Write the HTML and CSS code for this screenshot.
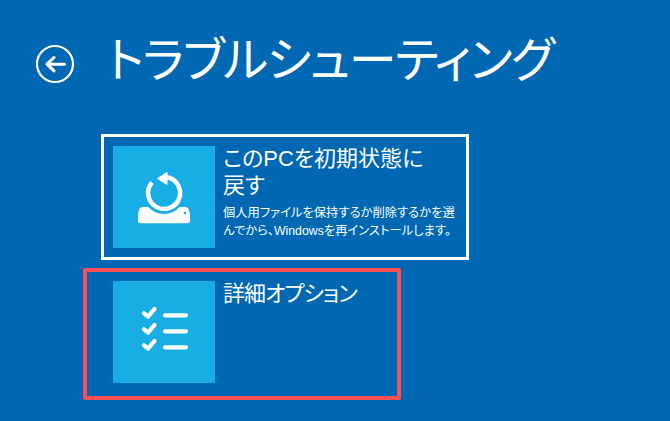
FILE: index.html
```html
<!DOCTYPE html>
<html lang="ja">
<head>
<meta charset="utf-8">
<title>トラブルシューティング</title>
<link rel="stylesheet" href="styles.css">
</head>
<body>
<main class="page">
  <header class="header">
    <svg class="back" viewBox="0 0 40 40" aria-hidden="true">
      <circle cx="20" cy="20" r="18" fill="none" stroke="#fff" stroke-width="2.200"/>
      <path d="M29.500 20.200H13M19 13.500L12 20.200l7 6.700" fill="none" stroke="#fff" stroke-width="3" stroke-linecap="round" stroke-linejoin="round"/>
    </svg>
    <h1 class="title">トラブルシューティング</h1>
  </header>
  <section class="options">
    <div class="card card-focus">
      <div class="tile">
        <svg class="tile-icon" viewBox="0 0 102 102" aria-hidden="true">
          <path d="M53 31.100A16 16 0 1 1 39 36.500" fill="none" stroke="#fff" stroke-width="4.500"/>
          <path d="M44.500 32.500L54 26.500V38.500Z" fill="#fff" stroke="#fff" stroke-width="1" stroke-linejoin="round"/>
          <path fill-rule="evenodd" fill="#fff" d="M35.400 61A21 21 0 0 0 66.600 61H72.500C74 61 75 62 75.500 63L77 67.500V74.500C77 76.300 75.800 77.300 74 77.300H28C26.200 77.300 25 76.300 25 74.500V67.500L26.500 63C27 62 28 61 29.500 61ZM72 65.700A1.300 1.300 0 1 0 72 68.300A1.300 1.300 0 1 0 72 65.700Z"/>
        </svg>
      </div>
      <div class="text">
        <h2 class="card-title">このPCを初期状態に戻す</h2>
        <p class="card-desc">個人用ファイルを保持するか削除するかを選んでから、Windowsを再インストールします。</p>
      </div>
    </div>
    <div class="card card-marked">
      <div class="tile">
        <svg class="tile-icon" viewBox="0 0 102 102" aria-hidden="true">
          <g fill="none" stroke="#fff" stroke-width="4.200" stroke-linecap="round" stroke-linejoin="round">
            <path d="M31 32.300L35 35.700L41.500 28M31 48.300L35 51.700L41.500 44M31 64.300L35 67.700L41.500 60"/>
            <path d="M52 34.300H73M52 50.300H73M52 66.300H73"/>
          </g>
        </svg>
      </div>
      <div class="text">
        <h2 class="card-title">詳細オプション</h2>
      </div>
    </div>
  </section>
</main>
</body>
</html>
```
FILE: styles.css
```css
* { box-sizing: border-box; }
html, body { margin: 0; height: 100%; }
body {
  background: #0068b2;
  color: #fff;
  font-family: "Liberation Sans", "Noto Sans CJK JP", sans-serif;
  font-feature-settings: "palt";
  overflow: hidden;
}
.page { padding: 31px 0 0 0; }
.header {
  display: flex;
  align-items: center;
  height: 60px;
  padding-left: 35px;
  gap: 32px;
}
.back { width: 40px; height: 40px; flex: none; margin-top: 6px; }
.title {
  margin: 0;
  font-size: 48px;
  font-weight: 400;
  letter-spacing: -1.400px;
  line-height: 60px;
  white-space: nowrap;
}
.options {
  display: flex;
  flex-direction: column;
  margin-top: 43px;
  gap: 8px;
}
.card {
  display: flex;
  gap: 8px;
}
.card-focus {
  width: 368px;
  height: 126px;
  margin-left: 101px;
  padding: 9px;
  border: 3px solid #fff;
}
.card-marked {
  width: 318px;
  height: 132px;
  margin-left: 83px;
  padding: 9px 26px;
  border: 4px solid #fb5058;
  border-radius: 2px;
}
.card-marked .card-title { letter-spacing: -1px; }
.tile {
  width: 102px;
  height: 102px;
  flex: none;
  background: #18aee5;
}
.tile-icon { display: block; width: 102px; height: 102px; }
.text { flex: 1; min-width: 0; }
.card-title {
  margin: -1px 0 0;
  max-width: 215px;
  font-size: 22px;
  font-weight: 400;
  line-height: 27px;
}
.card-desc {
  margin: 5px 0 0;
  font-size: 12.300px;
  line-height: 18px;
}
```
